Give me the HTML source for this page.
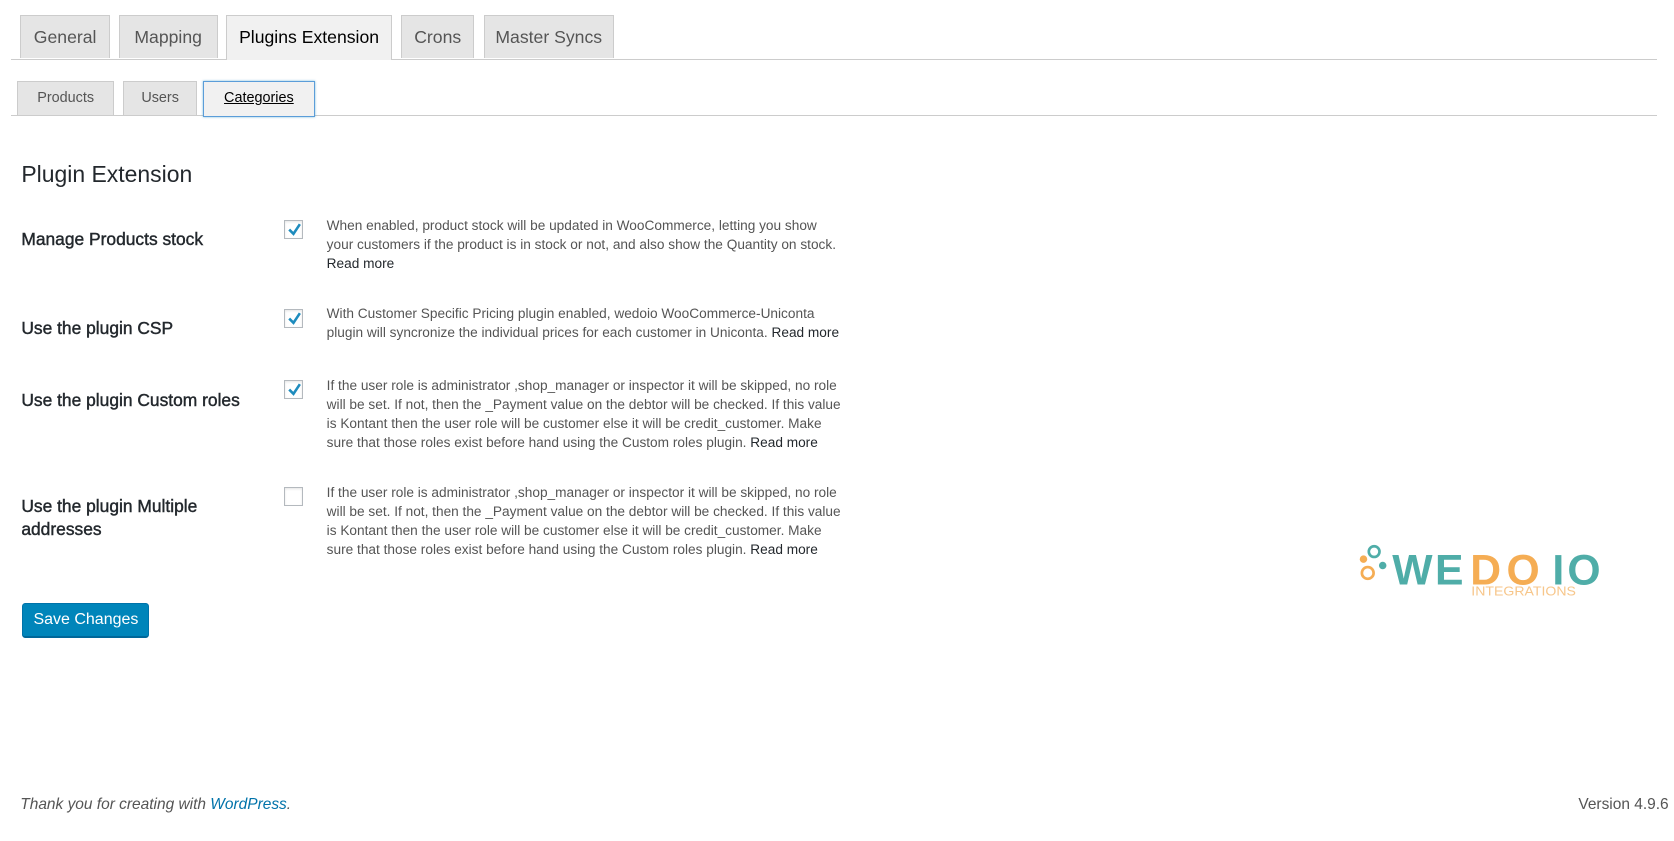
<!DOCTYPE html>
<html><head><meta charset="utf-8"><style>
html,body{margin:0;padding:0;background:#fff;}
body{width:1568px;height:788px;zoom:1.0676;position:relative;overflow:hidden;font-family:"Liberation Sans",sans-serif;}
.a{position:absolute;white-space:nowrap;}
.tab{position:absolute;top:14px;height:40px;background:#e5e5e5;border:1px solid #ccc;border-bottom:none;font-size:16.5px;color:#555;line-height:40px;text-align:center;box-sizing:border-box;}
.tab.act{background:#f1f1f1;color:#000;height:42px;}
.st{position:absolute;top:76px;height:32px;background:#e5e5e5;border:1px solid #ccc;border-bottom:none;font-size:13.5px;color:#555;line-height:31px;text-align:center;box-sizing:border-box;}
.lbl{position:absolute;left:20px;font-size:16.3px;color:#23282d;-webkit-text-stroke:0.4px #23282d;line-height:21px;}
.cb{position:absolute;left:266px;width:18px;height:18px;border:1px solid #b4b9be;box-sizing:border-box;background:#fff;box-shadow:inset 0 1px 2px rgba(0,0,0,.1);}
.cb svg{position:absolute;left:1px;top:0;}
.d{position:absolute;left:306px;font-size:12.8px;color:#555;line-height:17.8px;white-space:nowrap;}
.d span{color:#23282d;}
.L{font-family:"Liberation Sans",sans-serif;font-size:40px;font-weight:bold;}
</style></head><body>
<div class="a" style="left:10px;top:55px;width:1542px;height:1px;background:#ccc"></div>
<div class="tab" style="left:19px;width:84px">General</div>
<div class="tab" style="left:111px;width:93px">Mapping</div>
<div class="tab act" style="left:212px;width:155px">Plugins Extension</div>
<div class="tab" style="left:376px;width:68px">Crons</div>
<div class="tab" style="left:453px;width:122px">Master Syncs</div>

<div class="a" style="left:10px;top:108px;width:1542px;height:1px;background:#ccc"></div>
<div class="st" style="left:16px;width:91px">Products</div>
<div class="st" style="left:115px;width:70px">Users</div>
<div class="st" style="left:190px;width:105px;height:34px;border:1px solid #5b9dd9;background:#f1f1f1;color:#000;text-decoration:underline;box-shadow:0 0 2px rgba(30,140,190,.6)">Categories</div>

<div class="a" style="left:20px;top:151px;font-size:21.5px;color:#23282d">Plugin Extension</div>

<div class="lbl" style="top:214px">Manage Products stock</div>
<div class="cb" style="top:206px"><svg width="16" height="16" viewBox="0 0 16 16"><path d="M3 8 L7 12 L13 3" fill="none" stroke="#1e8cbe" stroke-width="2.4"/></svg></div>
<div class="d" style="top:202px">When enabled, product stock will be updated in WooCommerce, letting you show<br>your customers if the product is in stock or not, and also show the Quantity on stock.<br><span>Read more</span></div>

<div class="lbl" style="top:297px">Use the plugin CSP</div>
<div class="cb" style="top:289px"><svg width="16" height="16" viewBox="0 0 16 16"><path d="M3 8 L7 12 L13 3" fill="none" stroke="#1e8cbe" stroke-width="2.4"/></svg></div>
<div class="d" style="top:285px">With Customer Specific Pricing plugin enabled, wedoio WooCommerce-Uniconta<br>plugin will syncronize the individual prices for each customer in Uniconta. <span>Read more</span></div>

<div class="lbl" style="top:364px">Use the plugin Custom roles</div>
<div class="cb" style="top:356px"><svg width="16" height="16" viewBox="0 0 16 16"><path d="M3 8 L7 12 L13 3" fill="none" stroke="#1e8cbe" stroke-width="2.4"/></svg></div>
<div class="d" style="top:352px">If the user role is administrator ,shop_manager or inspector it will be skipped, no role<br>will be set. If not, then the _Payment value on the debtor will be checked. If this value<br>is Kontant then the user role will be customer else it will be credit_customer. Make<br>sure that those roles exist before hand using the Custom roles plugin. <span>Read more</span></div>

<div class="lbl" style="top:464px">Use the plugin Multiple<br>addresses</div>
<div class="cb" style="top:456px"></div>
<div class="d" style="top:452px">If the user role is administrator ,shop_manager or inspector it will be skipped, no role<br>will be set. If not, then the _Payment value on the debtor will be checked. If this value<br>is Kontant then the user role will be customer else it will be credit_customer. Make<br>sure that those roles exist before hand using the Custom roles plugin. <span>Read more</span></div>

<div class="a" style="left:21px;top:565px;width:119px;height:33px;background:#0085ba;border:1px solid #0073aa;border-bottom:2px solid #006799;border-radius:3px;box-sizing:border-box;color:#fff;font-size:15px;line-height:30px;text-align:center">Save Changes</div>

<svg class="a" style="left:1270px;top:508px" width="240" height="56" viewBox="0 0 240 56">
<circle cx="17" cy="9" r="5" fill="none" stroke="#4fada8" stroke-width="2.5"/>
<circle cx="7" cy="16" r="3.5" fill="#f5ad54"/>
<circle cx="11" cy="29" r="5.5" fill="none" stroke="#f5ad54" stroke-width="2.5"/>
<circle cx="25" cy="22" r="3.5" fill="#4fada8"/>
<text class="L" x="34" y="40" fill="#4fada8">W</text>
<text class="L" x="74" y="40" fill="#4fada8">E</text>
<text class="L" x="107" y="40" fill="#f5ad54">D</text>
<text class="L" x="141" y="40" fill="#f5ad54">O</text>
<text class="L" x="184" y="40" fill="#4fada8">I</text>
<text class="L" x="198" y="40" fill="#4fada8">O</text>
<text x="108" y="50" font-family="Liberation Sans,sans-serif" font-size="12" fill="#f7c68a" textLength="98" lengthAdjust="spacingAndGlyphs">INTEGRATIONS</text>
</svg>

<div class="a" style="left:19px;top:746px;font-size:14.5px;font-style:italic;color:#555">Thank you for creating with <span style="color:#0073aa">WordPress</span>.</div>
<div class="a" style="right:5px;top:746px;font-size:14.5px;color:#555">Version 4.9.6</div>
</body></html>
